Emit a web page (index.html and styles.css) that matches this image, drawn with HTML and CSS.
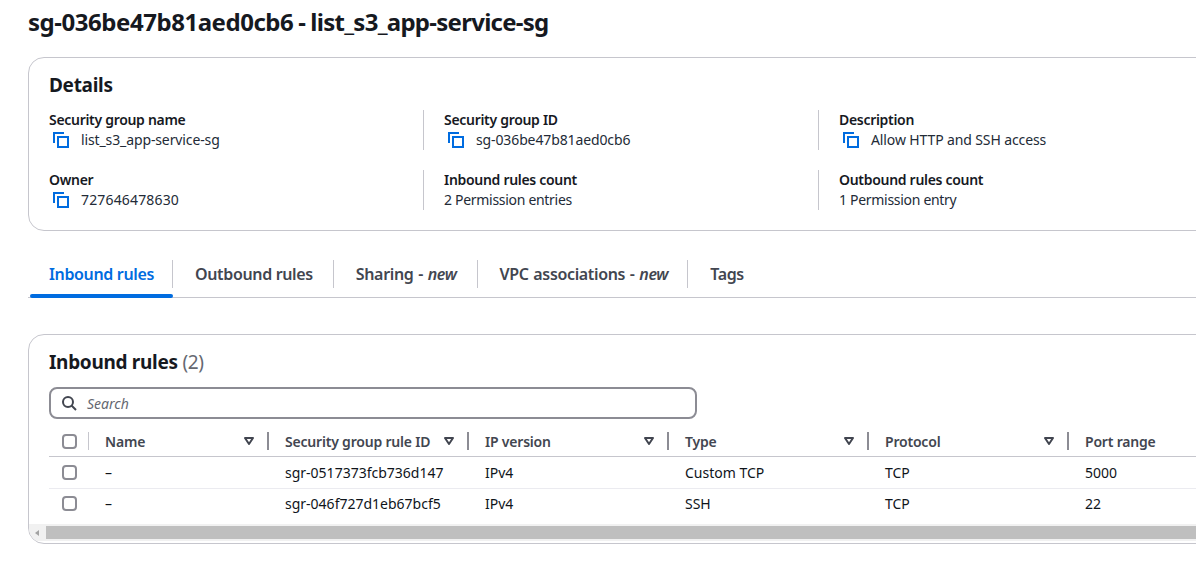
FILE: index.html
```html
<!DOCTYPE html>
<html lang="en">
<head>
  <meta charset="UTF-8" />
  <title>Security group</title>
  <link rel="stylesheet" href="styles.css">
</head>
<body>
  <svg class="sprites" width="0" height="0">
    <symbol id="copy" viewBox="0 0 16 16">
      <path d="M1 11V1h10" fill="none" stroke="currentColor" stroke-width="2"/>
      <rect x="5" y="5" width="10" height="10" fill="none" stroke="currentColor" stroke-width="2"/>
    </symbol>
    <symbol id="caret" viewBox="0 0 10 8">
      <path d="M1 1h8L5 7z" fill="none" stroke="currentColor" stroke-width="2" stroke-linejoin="round"/>
    </symbol>
  </svg>

  <div class="page">
    <h1><span class="sg-id">sg-036be47b81aed0cb6</span> - list_s3_app-service-sg</h1>

    <section class="card details">
      <h2>Details</h2>
      <div class="detail-grid">
        <div class="detail">
          <div class="label">Security group name</div>
          <div class="value"><svg class="copy"><use href="#copy"/></svg>list_s3_app-service-sg</div>
        </div>
        <div class="detail">
          <div class="label">Security group ID</div>
          <div class="value"><svg class="copy"><use href="#copy"/></svg>sg-036be47b81aed0cb6</div>
        </div>
        <div class="detail">
          <div class="label">Description</div>
          <div class="value"><svg class="copy"><use href="#copy"/></svg>Allow HTTP and SSH access</div>
        </div>
        <div class="detail">
          <div class="label">Owner</div>
          <div class="value owner"><svg class="copy"><use href="#copy"/></svg>727646478630</div>
        </div>
        <div class="detail">
          <div class="label">Inbound rules count</div>
          <div class="value entries">2 Permission entries</div>
        </div>
        <div class="detail">
          <div class="label">Outbound rules count</div>
          <div class="value entries">1 Permission entry</div>
        </div>
      </div>
    </section>

    <nav class="tabs">
      <a class="tab active">Inbound rules</a>
      <a class="tab">Outbound rules</a>
      <a class="tab tab-new">Sharing - <em>new</em></a>
      <a class="tab tab-new">VPC associations - <em>new</em></a>
      <a class="tab">Tags</a>
    </nav>

    <section class="card rules">
      <h2>Inbound rules <span class="count">(2)</span></h2>
      <div class="search">
        <svg class="search-icon" viewBox="0 0 16 16"><circle cx="7" cy="7" r="5" fill="none" stroke="currentColor" stroke-width="2"/><path d="M10.5 10.5L15 15" stroke="currentColor" stroke-width="2"/></svg>
        <span>Search</span>
      </div>
      <table>
        <thead>
          <tr>
            <th class="check"><span class="box"></span></th>
            <th class="name-col"><div class="th-inner">Name<svg class="caret"><use href="#caret"/></svg></div></th>
            <th><div class="th-inner">Security group rule ID<svg class="caret"><use href="#caret"/></svg></div></th>
            <th><div class="th-inner">IP version<svg class="caret"><use href="#caret"/></svg></div></th>
            <th><div class="th-inner">Type<svg class="caret"><use href="#caret"/></svg></div></th>
            <th><div class="th-inner">Protocol<svg class="caret"><use href="#caret"/></svg></div></th>
            <th><div class="th-inner">Port range<svg class="caret"><use href="#caret"/></svg></div></th>
          </tr>
        </thead>
        <tbody>
          <tr>
            <td class="check"><span class="box"></span></td>
            <td>–</td>
            <td>sgr-0517373fcb736d147</td>
            <td>IPv4</td>
            <td>Custom TCP</td>
            <td>TCP</td>
            <td>5000</td>
          </tr>
          <tr>
            <td class="check"><span class="box"></span></td>
            <td>–</td>
            <td>sgr-046f727d1eb67bcf5</td>
            <td>IPv4</td>
            <td>SSH</td>
            <td>TCP</td>
            <td>22</td>
          </tr>
        </tbody>
      </table>
      <div class="scrollbar">
        <span class="arrow"></span>
        <span class="thumb"></span>
      </div>
    </section>
  </div>
</body>
</html>
```

FILE: styles.css
```css
* {
  margin: 0;
  padding: 0;
  box-sizing: border-box;
}

html, body {
  height: 100%;
  overflow: hidden;
  background: #fff;
}

body {
  font-family: "Noto Sans", "Open Sans", sans-serif;
  font-size: 14px;
  color: #16191f;
}

.sprites {
  position: absolute;
}

.page {
  width: 1300px;
  padding: 7px 0 0 28px;
}

h1 {
  font-size: 24px;
  line-height: 30px;
  font-weight: 700;
  letter-spacing: -0.73px;
  word-spacing: -0.5px;
  margin-bottom: 20px;
}

.sg-id {
  letter-spacing: -0.46px;
}

.card {
  border: 1px solid #c6c6cd;
  border-radius: 16px;
  background: #fff;
}

h2 {
  font-size: 19px;
  line-height: 24px;
  font-weight: 700;
  letter-spacing: -0.3px;
}

.details {
  height: 174px;
  padding: 15px 20px;
}

.detail-grid {
  display: grid;
  grid-template-columns: repeat(3, 375px);
  column-gap: 20px;
  row-gap: 20px;
  margin-top: 13px;
}

.detail {
  height: 40px;
  border-right: 1px solid #c6c6cd;
  line-height: 20px;
}

.label {
  font-weight: 600;
  font-size: 14px;
  letter-spacing: -0.3px;
}

.value {
  display: flex;
  align-items: center;
  color: #232b37;
  letter-spacing: -0.12px;
}

.value.owner {
  letter-spacing: 0.16px;
}

.value.entries {
  letter-spacing: -0.3px;
}

.copy {
  width: 16px;
  height: 16px;
  margin: 0 12px 0 4px;
  color: #006ce0;
}

.tabs {
  display: flex;
  gap: 1px;
  height: 40px;
  margin-top: 27px;
  border-bottom: 1px solid #c6c6cd;
  align-items: flex-start;
}

.tab {
  position: relative;
  height: 39px;
  padding: 5px 21px 0 21px;
  font-size: 16px;
  line-height: 22px;
  font-weight: 600;
  letter-spacing: -0.35px;
  color: #424650;
}

.tab-new {
  word-spacing: 0.9px;
}

.tab-new + .tab-new {
  padding-right: 20px;
}

.tab::after {
  content: "";
  position: absolute;
  right: 0;
  top: 2px;
  height: 28px;
  border-right: 1px solid #c6c6cd;
}

.tab:last-child::after {
  display: none;
}

.tab em {
  font-style: italic;
}

.tab.active {
  padding-right: 19px;
  color: #006ce0;
}

.tab.active::before {
  content: "";
  position: absolute;
  left: 2px;
  right: 0;
  bottom: -1px;
  height: 4px;
  border-radius: 2px;
  background: #006ce0;
}

.rules {
  height: 210px;
  margin-top: 36px;
  padding-top: 15px;
  overflow: hidden;
}

.rules h2 {
  margin-left: 20px;
}

.count {
  font-weight: 400;
  color: #656871;
}

.search {
  display: flex;
  align-items: center;
  width: 648px;
  height: 32px;
  margin: 13px 0 0 20px;
  padding-left: 10px;
  border: 2px solid #8c8c94;
  border-radius: 8px;
  color: #656871;
  font-style: italic;
  font-size: 14px;
}

.search-icon {
  width: 16px;
  height: 16px;
  margin-right: 10px;
  color: #424650;
}

table {
  margin: 8px 0 0 20px;
  border-collapse: collapse;
  table-layout: fixed;
  width: 1220px;
}

th, td {
  width: 200px;
  text-align: left;
  padding-left: 16px;
}

th.check, td.check {
  width: 40px;
  padding-left: 13px;
}

th.name-col {
  width: 180px;
}

th {
  height: 29px;
  font-weight: 600;
  letter-spacing: -0.2px;
  color: #424650;
  border-bottom: 1px solid #c6c6cd;
}

td {
  height: 32px;
  border-bottom: 1px solid #ebebf0;
  color: #0f141a;
}

tbody tr:last-child td {
  height: 31px;
  border-bottom: none;
}

.box {
  display: block;
  width: 15px;
  height: 15px;
  border: 2px solid #8c8c94;
  border-radius: 4px;
}

.th-inner {
  display: flex;
  align-items: center;
  justify-content: space-between;
  padding-right: 15px;
  position: relative;
}

th .caret {
  width: 10px;
  height: 8px;
  color: #424650;
}

th .th-inner::before {
  content: "";
  position: absolute;
  left: -18px;
  top: 0;
  height: 18px;
  border-left: 2px solid #8c8c94;
}

th:nth-child(2) .th-inner::before {
  left: -17px;
  border-left: 1px solid #c6c6cd;
}

.scrollbar {
  display: flex;
  height: 17px;
  margin-top: 5px;
  background: #f1f1f1;
  padding: 2px 0;
}

.arrow {
  width: 17px;
  position: relative;
}

.arrow::before {
  content: "";
  position: absolute;
  left: 6px;
  top: 4px;
  border: 3px solid transparent;
  border-left: 0;
  border-right: 4px solid #a3a3a3;
}

.thumb {
  flex: 1;
  background: #bfbfbf;
}
```
